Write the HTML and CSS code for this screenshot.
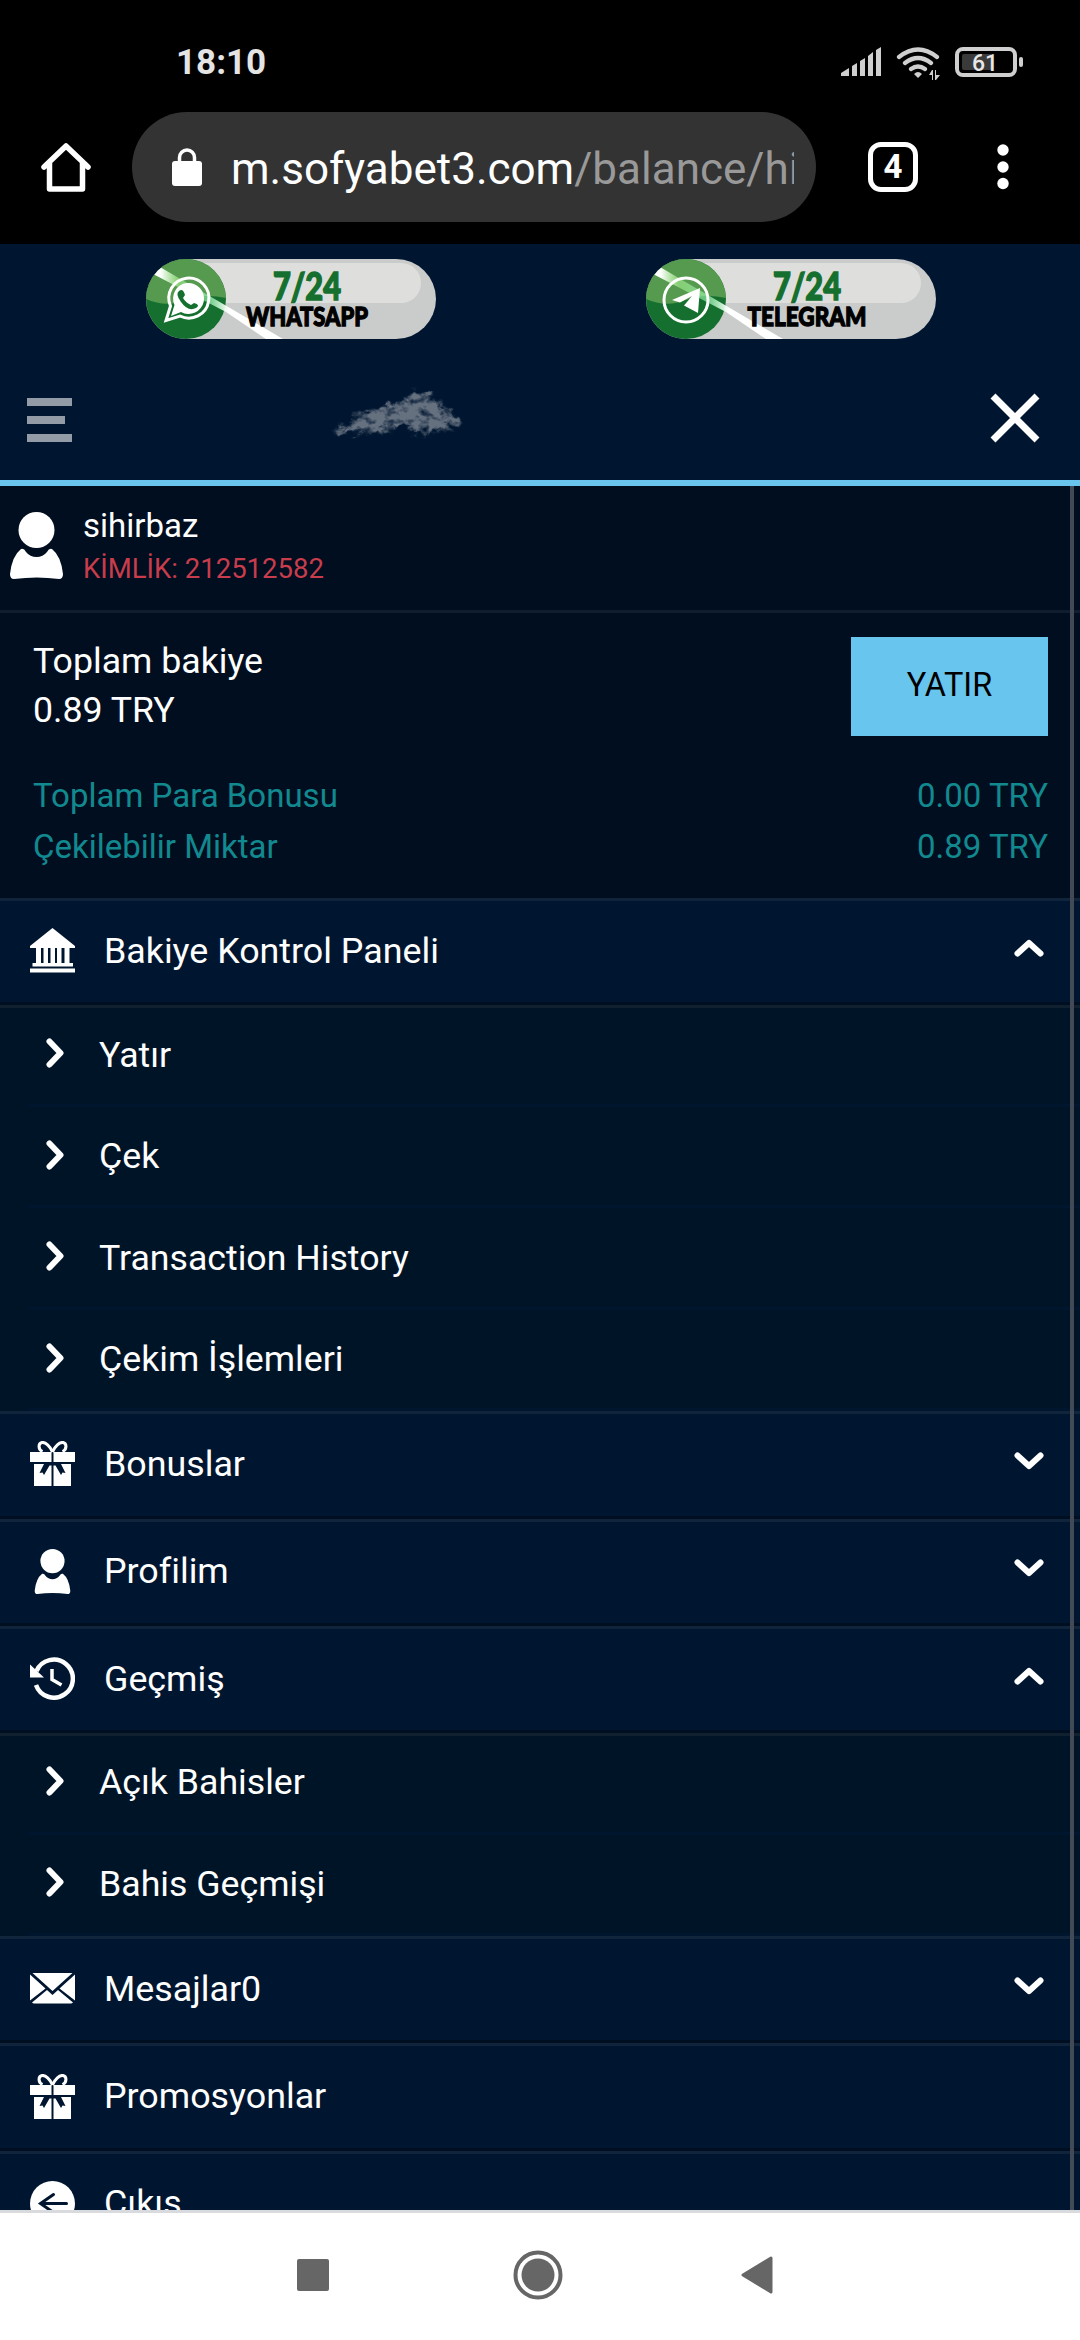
FILE: index.html
```html
<!DOCTYPE html>
<html lang="tr">
<head>
    <meta charset="UTF-8">
    <meta name="viewport" content="width=device-width, initial-scale=1.0">
    <title>Sofyabet</title>
    <link rel="stylesheet" href="styles.css">
</head>
<body>
    <svg class="defs" width="0" height="0">
        <symbol id="i-bank" viewBox="0 0 45 45">
            <path d="M22.5 0 45 18v2H0v-2zM6 20h5v15H6zM13.500 20h4.500v15h-4.500zM20.500 20h4.500v15h-4.500zM27 20h4.500v15H27zM34.500 20h5v15h-5zM2.500 35h40.500v3.500H2.500zM0 40.500h45V44.500H0z"/>
        </symbol>
        <symbol id="i-gift" viewBox="0 0 45 45">
            <path d="M0 11h21.500v10H0zM23.500 11H45v10H23.500zM4 23h10l-4.500 9 3-.5 1.500 2.500 5.500-9.500 2 0V45H4zM41 23H31l4.500 9-3-.5-1.500 2.500-5.500-9.500-2 0V45H41z"/>
            <path d="M22.500 11C20 5 15.500 1 12 1.500 8 2.500 8 8.500 12.500 10.500M22.500 11C25 5 29.500 1 33 1.500 37 2.500 37 8.500 32.500 10.500" fill="none" stroke="#fff" stroke-width="3"/>
        </symbol>
        <symbol id="i-user" viewBox="0 0 53 67">
            <ellipse cx="26.500" cy="18" rx="18" ry="18"/>
            <path d="M11 37q3-1 5 3 4 5 10.500 5T37 40q2-4 5-3 9 7 11 25 0 5-4 5-22-3-45 0-4 0-4-5Q2 44 11 37z"/>
        </symbol>
        <symbol id="i-history" viewBox="0 0 45 45">
            <path d="M6.500 15A19 19 0 1 1 6 29" fill="none" stroke="#fff" stroke-width="4.500"/>
            <path d="M0 8.500 14 21.500H0z"/>
            <path d="M22 13v10.500l9.500 5.500" fill="none" stroke="#fff" stroke-width="3.500"/>
        </symbol>
        <symbol id="i-mail" viewBox="0 0 45 45">
            <path d="M2.500 7h40L22.500 25zM0 8.500 15.500 22.500 0 34.500zM45 8.500 29.500 22.500 45 34.500zM17 24l5.500 5 5.500-5 15 12.500q-1 1-2 1H4q-1 0-2-1z"/>
        </symbol>
        <symbol id="i-exit" viewBox="0 0 45 45">
            <circle cx="22.500" cy="22.500" r="22.500"/>
            <path d="M36.500 22.500H11M23.500 13.500 10.500 22.500l13 9" fill="none" stroke="#001630" stroke-width="3" stroke-linecap="round"/>
        </symbol>
        <symbol id="i-up" viewBox="0 0 30 18">
            <path d="M3.500 14.500 15 4l11.500 10.500" fill="none" stroke="#fff" stroke-width="6" stroke-linecap="round" stroke-linejoin="round"/>
        </symbol>
        <symbol id="i-down" viewBox="0 0 30 18">
            <path d="M3.500 3.500 15 14 26.500 3.500" fill="none" stroke="#fff" stroke-width="6" stroke-linecap="round" stroke-linejoin="round"/>
        </symbol>
        <symbol id="i-right" viewBox="0 0 18 30">
            <path d="M3.500 3.500 14.500 15 3.500 26.500" fill="none" stroke="#fff" stroke-width="6" stroke-linecap="round" stroke-linejoin="round"/>
        </symbol>
        <linearGradient id="beam" x1="0" y1="0" x2="1" y2="0">
            <stop offset="0" stop-color="#fff"/>
            <stop offset=".06" stop-color="#fff"/>
            <stop offset=".2" stop-color="#a5f08c" stop-opacity=".6"/>
            <stop offset=".42" stop-color="#a0ffb8" stop-opacity=".6"/>
            <stop offset=".58" stop-color="#fff"/>
            <stop offset="1" stop-color="#fff"/>
        </linearGradient>
        <clipPath id="pill"><rect width="290" height="80" rx="40"/></clipPath>
        <clipPath id="round"><circle cx="40" cy="40" r="40"/></clipPath>
        <g id="badge">
            <g clip-path="url(#pill)">
                <rect width="290" height="80" fill="#cacccb"/>
                <rect x="20" y="4" width="255" height="40" rx="20" fill="#dededc"/>
            </g>
            <g clip-path="url(#round)">
                <rect width="80" height="80" fill="#15702f"/>
                <path d="M0 0h80v39q-22-5-40 2-20 8-40-1z" fill="#569a50"/>
            </g>
            <g clip-path="url(#pill)">
                <path d="M7 15 14 8 137 80h-17L80 53z" fill="url(#beam)"/>
            </g>
        </g>
    </svg>

    <header class="status">
        <span class="clock">18:10</span>
        <svg class="status-icons" width="184" height="36" viewBox="840 45 184 36">
            <path fill="#cfcfcf" d="M841 76v-3l8-5v8zM852 76V66l5-3v13zM860 76V61l5-3v18zM868 76V56l5-4v24zM876 76V50l5-3v29z"/>
            <g fill="none" stroke="#cfcfcf" stroke-width="4.200" stroke-linecap="round">
                <path d="M899 57Q918 42 937 57M905 63q13-10 26 0M911 69q7-5 14 0"/>
            </g>
            <path fill="#cfcfcf" d="M914 74q4-4 8 0l-4 4zM929 75l3-5h1v10h-1v-5zM935 70h1v5h4l-4 5h-1z"/>
            <rect x="957" y="49" width="58" height="26" rx="6" fill="none" stroke="#cfcfcf" stroke-width="4"/>
            <rect x="962" y="54" width="30" height="16" rx="2" fill="#3a3a3a"/>
            <rect x="1019" y="57" width="4" height="10" rx="2" fill="#cfcfcf"/>
            <text x="985" y="71" class="battery" text-anchor="middle">61</text>
        </svg>
    </header>

    <div class="browser">
        <svg class="home" width="50" height="50" viewBox="0 0 50 50">
            <path d="M3 25 25 4l22 21M8.500 21v26h33V21" fill="none" stroke="#fff" stroke-width="5.500" stroke-linejoin="round" stroke-linecap="round"/>
        </svg>
        <div class="address">
            <svg width="30" height="38" viewBox="0 0 30 38">
                <path d="M7.500 14V9.500a7.500 7.500 0 0 1 15 0V14" fill="none" stroke="#fff" stroke-width="3.500"/>
                <rect y="13" width="30" height="25" rx="3" fill="#fff"/>
            </svg>
            <span class="url">m.sofyabet3.com<span class="path">/balance/history</span></span>
        </div>
        <div class="tabs">4</div>
        <svg class="dots" width="12" height="46" viewBox="0 0 12 46" fill="#fff">
            <circle cx="6" cy="6" r="5.700"/><circle cx="6" cy="23" r="5.700"/><circle cx="6" cy="39.500" r="5.700"/>
        </svg>
    </div>

    <main class="page">
        <div class="support">
            <svg width="290" height="82" viewBox="0 0 290 82">
                <use href="#badge"/>
                <path d="M20 61.500 24.500 47A20 20 0 1 1 34 57z" fill="none" stroke="#fff" stroke-width="3"/>
                <path d="M25 57 28.500 46A15.500 15.500 0 1 1 35 53z" fill="#fff"/>
                <path d="M33 32q4-3 6 4l-2 3q3 5 8 7l3-2q7 2 2 5-8 4-15-6-6-8-2-11z" fill="#15702f"/>
                <text x="161" y="41" textLength="68" lengthAdjust="spacingAndGlyphs" class="hours">7/24</text>
                <text x="161" y="67" textLength="122" lengthAdjust="spacingAndGlyphs" class="channel">WHATSAPP</text>
            </svg>
            <svg width="290" height="82" viewBox="0 0 290 82">
                <use href="#badge"/>
                <circle cx="40" cy="41" r="22" fill="none" stroke="#fff" stroke-width="3"/>
                <path d="M26 41 54 29 52 54 38 46.500 46 37 34 43.500z" fill="#fff"/>
                <text x="161" y="41" textLength="68" lengthAdjust="spacingAndGlyphs" class="hours">7/24</text>
                <text x="161" y="67" textLength="119" lengthAdjust="spacingAndGlyphs" class="channel">TELEGRAM</text>
            </svg>
        </div>

        <div class="topbar">
            <div class="burger"><i></i><i></i><i></i></div>
            <svg class="smoke" width="136" height="56" viewBox="0 0 136 56">
                <filter id="puff" x="-10%" y="-20%" width="120%" height="140%">
                    <feTurbulence type="fractalNoise" baseFrequency=".09 .12" numOctaves="3" seed="4" result="n"/>
                    <feGaussianBlur in="SourceGraphic" stdDeviation="1.600" result="b"/>
                    <feDisplacementMap in="b" in2="n" scale="18" xChannelSelector="R" yChannelSelector="G" result="d"/>
                    <feColorMatrix in="n" values="0 0 0 0 1  0 0 0 0 1  0 0 0 0 1  0 0 2.600 0 -.45" result="m"/>
                    <feComposite in="d" in2="m" operator="in" result="c"/>
                    <feGaussianBlur in="c" stdDeviation=".7"/>
                </filter>
                <g filter="url(#puff)" fill="#667180">
                    <ellipse cx="94" cy="18" rx="17" ry="13"/>
                    <ellipse cx="101" cy="32" rx="27" ry="10"/>
                    <ellipse cx="94" cy="38" rx="16" ry="9"/>
                    <path d="M20 30Q60 16 88 10L90 36Q60 42 36 44 10 48 3 44 12 38 28 36z"/>
                </g>
            </svg>
            <svg class="close" width="50" height="50" viewBox="0 0 50 50">
                <path d="M3 3 47 47M47 3 3 47" stroke="#fff" stroke-width="7"/>
            </svg>
        </div>

        <div class="drawer">
            <div class="user">
                <svg width="53" height="67" fill="#fff"><use href="#i-user"/></svg>
                <div>
                    <div class="name">sihirbaz</div>
                    <div class="uid">KİMLİK: 212512582</div>
                </div>
            </div>

            <div class="balance">
                <div class="total">
                    <div>Toplam bakiye<br>0.89 TRY</div>
                    <button class="deposit">YATIR</button>
                </div>
                <div class="line"><span>Toplam Para Bonusu</span><span>0.00 TRY</span></div>
                <div class="line"><span>Çekilebilir Miktar</span><span>0.89 TRY</span></div>
            </div>

            <div class="item"><svg class="icon"><use href="#i-bank"/></svg>Bakiye Kontrol Paneli<svg class="arrow"><use href="#i-up"/></svg></div>
            <div class="sub">
                <div class="subitem"><svg><use href="#i-right"/></svg>Yatır</div>
                <div class="subitem"><svg><use href="#i-right"/></svg>Çek</div>
                <div class="subitem"><svg><use href="#i-right"/></svg>Transaction History</div>
                <div class="subitem"><svg><use href="#i-right"/></svg>Çekim İşlemleri</div>
            </div>
            <div class="item"><svg class="icon"><use href="#i-gift"/></svg>Bonuslar<svg class="arrow"><use href="#i-down"/></svg></div>
            <div class="item"><svg class="icon"><use href="#i-user"/></svg>Profilim<svg class="arrow"><use href="#i-down"/></svg></div>
            <div class="item"><svg class="icon"><use href="#i-history"/></svg>Geçmiş<svg class="arrow"><use href="#i-up"/></svg></div>
            <div class="sub">
                <div class="subitem"><svg><use href="#i-right"/></svg>Açık Bahisler</div>
                <div class="subitem"><svg><use href="#i-right"/></svg>Bahis Geçmişi</div>
            </div>
            <div class="item"><svg class="icon"><use href="#i-mail"/></svg>Mesajlar0<svg class="arrow"><use href="#i-down"/></svg></div>
            <div class="item"><svg class="icon"><use href="#i-gift"/></svg>Promosyonlar</div>
            <div class="item"><svg class="icon"><use href="#i-exit"/></svg>Çıkış</div>
            <div class="scrollbar"></div>
        </div>
    </main>

    <nav class="navbar">
        <svg width="32" height="32"><rect width="32" height="32" rx="2" fill="#666"/></svg>
        <svg class="home-button" width="50" height="50" viewBox="0 0 50 50">
            <circle cx="25" cy="25" r="22.500" fill="none" stroke="#666" stroke-width="4"/>
            <circle cx="25" cy="25" r="16.500" fill="#666"/>
        </svg>
        <svg width="32" height="38" viewBox="0 0 32 38">
            <path d="M2 19 30 2v34z" fill="#666" stroke="#666" stroke-width="3" stroke-linejoin="round"/>
        </svg>
    </nav>
</body>
</html>
```

FILE: styles.css
```css
* {
    box-sizing: border-box;
}
body {
    margin: 0;
    width: 1080px;
    height: 2340px;
    overflow: hidden;
    display: flex;
    flex-direction: column;
    background: #000;
    color: #fff;
    font-family: Roboto, sans-serif;
}
svg {
    display: block;
    flex: none;
}
.defs {
    position: absolute;
}

/* phone status bar */
.status {
    height: 112px;
    flex: none;
    display: flex;
    justify-content: space-between;
    padding: 45px 56px 0 176px;
}
.clock {
    font-size: 35px;
    line-height: 36px;
    font-weight: 700;
    color: #e4e4e4;
}
.battery {
    font-size: 23px;
    font-weight: 500;
    fill: #e8e8e8;
}

/* browser toolbar */
.browser {
    height: 132px;
    flex: none;
    display: flex;
    align-items: center;
    padding: 0 71px 22px 41px;
}
.address {
    width: 684px;
    height: 110px;
    margin-left: 41px;
    padding: 0 22px 0 40px;
    border-radius: 55px;
    background: #333;
    display: flex;
    align-items: center;
    gap: 29px;
}
.url {
    flex: 1;
    overflow: hidden;
    white-space: nowrap;
    font-size: 44px;
    line-height: 60px;
    padding-top: 3px;
}
.path {
    color: #999;
}
.tabs {
    width: 50px;
    height: 50px;
    margin-left: 52px;
    border: 5.5px solid #fff;
    border-radius: 13px;
    font-size: 33px;
    line-height: 40px;
    font-weight: 700;
    text-align: center;
}
.dots {
    margin-left: auto;
}

/* site */
.page {
    flex: 1;
    min-height: 0;
    display: flex;
    flex-direction: column;
    background: #001630;
}
.support {
    display: flex;
    justify-content: space-between;
    padding: 15px 144px 0 146px;
    height: 106px;
    flex: none;
}
.hours,
.channel {
    font-family: Lato, sans-serif;
    font-weight: 900;
    text-anchor: middle;
}
.hours {
    font-size: 37px;
    fill: #15702f;
    stroke: #15702f;
    stroke-width: 1.5px;
}
.channel {
    font-size: 26px;
    fill: #000;
    stroke: #000;
    stroke-width: 1.3px;
}
.topbar {
    height: 136px;
    flex: none;
    display: flex;
    align-items: center;
    padding: 0 40px 0 27px;
    border-bottom: 6px solid #69c5ed;
}
.burger {
    padding-top: 10px;
}
.burger i {
    display: block;
    width: 45px;
    height: 8px;
    margin-bottom: 10px;
    background: #929ba6;
}
.burger i:nth-child(2) {
    width: 38px;
}
.burger i:last-child {
    margin-bottom: 0;
}
.smoke {
    margin-left: 258px;
}
.close {
    margin-left: auto;
    margin-top: 5px;
}

/* side menu */
.drawer {
    position: relative;
    flex: 1;
    min-height: 0;
    overflow: hidden;
    background: #000e1f;
}
.scrollbar {
    position: absolute;
    top: 0;
    bottom: 0;
    right: 6px;
    width: 4px;
    background: #434a55;
}
.user {
    height: 127px;
    display: flex;
    gap: 20px;
    padding: 26px 10px 0;
    border-bottom: 3px solid #101d2e;
}
.name {
    font-size: 33px;
    line-height: 40px;
    margin-top: -6px;
}
.uid {
    font-size: 27.5px;
    line-height: 40px;
    margin-top: 3px;
    color: #c83c4c;
}
.balance {
    height: 285px;
    padding: 24px 32px 0 33px;
}
.total {
    height: 133px;
    display: flex;
    justify-content: space-between;
    font-size: 35.7px;
    line-height: 49px;
}
.deposit {
    width: 197px;
    height: 99px;
    padding-bottom: 4px;
    border: 0;
    background: #67c5ee;
    color: #000;
    font: 32.5px Roboto, sans-serif;
}
.line {
    display: flex;
    justify-content: space-between;
    font-size: 33px;
    line-height: 51px;
    color: #12898f;
}
.item {
    height: 107.3px;
    display: flex;
    align-items: center;
    padding: 0 36px 2px 30px;
    font-size: 35.8px;
    background: #001630;
    border-top: 3px solid #10243c;
    border-bottom: 3px solid #000e22;
}
.icon {
    width: 45px;
    height: 45px;
    margin-right: 29px;
    fill: #fff;
}
.arrow {
    width: 30px;
    height: 18px;
    margin-left: auto;
    margin-bottom: 6px;
}
.sub {
    background: #001428;
    box-shadow: inset 0 3px #10202f;
    padding-left: 28px;
}
.subitem {
    height: 101.5px;
    display: flex;
    align-items: center;
    padding-left: 18px;
    font-size: 35.7px;
    border-bottom: 3px solid #00162f;
}
.subitem svg {
    width: 18px;
    height: 30px;
    margin-right: 35px;
    margin-bottom: 3px;
}

/* android buttons */
.navbar {
    height: 130px;
    flex: none;
    display: flex;
    align-items: center;
    padding: 0 307px 3px 297px;
    justify-content: space-between;
    background: #fff;
    border-top: 3px solid #d9dadd;
}
.home-button {
    margin-left: 5px;
}
```
